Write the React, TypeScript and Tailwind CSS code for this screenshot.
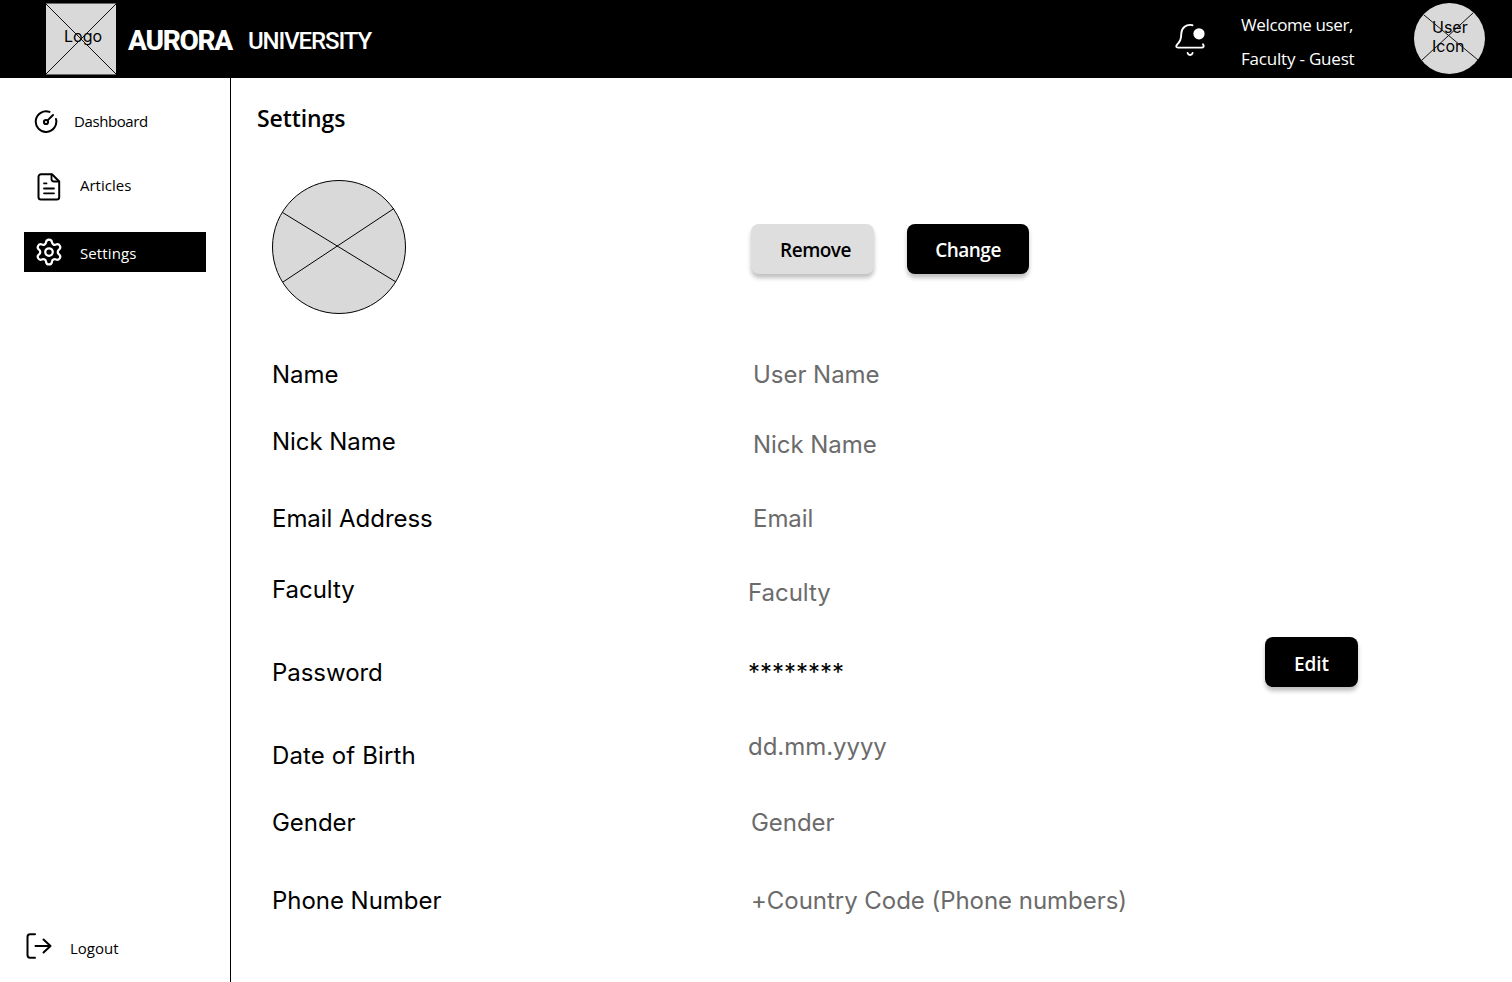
import React from "react";
import { Settings as SettingsIcon } from "lucide-react";

const human = "font-['Open_Sans','Noto_Sans',sans-serif] whitespace-nowrap";

const labels = [
  { text: "Name", gap: "" },
  { text: "Nick Name", gap: "mt-[37px]" },
  { text: "Email Address", gap: "mt-[47px]" },
  { text: "Faculty", gap: "mt-[41px]" },
  { text: "Password", gap: "mt-[53px]" },
  { text: "Date of Birth", gap: "mt-[53px] tracking-[0.13px]" },
  { text: "Gender", gap: "mt-[37px]" },
  { text: "Phone Number", gap: "mt-[48px]" },
];

const values = [
  { text: "User Name", gap: "pl-[5px]" },
  { text: "Nick Name", gap: "mt-[40px] pl-[5px]" },
  { text: "Email", gap: "mt-[44px] pl-[5px]" },
  { text: "Faculty", gap: "mt-[44px]" },
  { text: "********", gap: "mt-[50px] text-black" },
  { text: "dd.mm.yyyy", gap: "mt-[44px]" },
  { text: "Gender", gap: "mt-[46px] pl-[3px]" },
  { text: "+Country Code (Phone numbers)", gap: "mt-[48px] pl-[3px]" },
];

function Header() {
  return (
    <header className="flex h-[78px] shrink-0 bg-black text-white">
      <div className="ml-[46px] mt-[3px] grid h-[72px] w-[70px] shrink-0 bg-[#d9d9d9] text-black">
        <span className="col-start-1 row-start-1 ml-[18px] mt-[23px] text-[16px] leading-[20px]">Logo</span>
        <svg className="col-start-1 row-start-1" width="70" height="72" viewBox="0 0 70 72" fill="none" stroke="#111">
          <path d="M0 .5H70M0 71.5H70" stroke="#666" />
          <path d="M0 1 70 71M0 71 70 1" />
        </svg>
      </div>
      <div className="ml-3 mt-[21px] w-[104px] whitespace-nowrap font-['Roboto',sans-serif] text-[28px] font-extrabold leading-[40px] tracking-[-1.3px]">AURORA</div>
      <div className="ml-[16px] mt-[21px] whitespace-nowrap font-['Roboto',sans-serif] text-[24px] font-medium leading-[40px] tracking-[-1.1px]">UNIVERSITY</div>
      <svg className="ml-auto mr-[31px] mt-[20px]" width="40" height="40" viewBox="0 0 40 40" fill="none" stroke="white" strokeWidth="1.9" strokeLinecap="round">
        <path d="M22.5 5.2C16 3.8 11.5 8 11.3 13.5C11.2 19.5 10 21.2 7.2 24.5C5.5 26.4 6.2 27.6 8 27.6H31.5C33.8 27.6 34.3 26 33 24.2" />
        <path d="M17.6 33C18.4 35.6 21.8 35.6 22.6 33" />
        <circle cx="29" cy="13.8" r="5.6" fill="white" stroke="none" />
      </svg>
      <div className={`${human} mt-[8px] w-[173px] text-[17px] leading-[34px]`}>
        <div className="tracking-[-0.38px]">Welcome user,</div>
        <div className="tracking-[-0.2px]">Faculty - Guest</div>
      </div>
      <div className="mr-[27px] mt-[3px] grid h-[71px] w-[71px] shrink-0 rounded-full bg-[#d9d9d9] text-black">
        <div className="col-start-1 row-start-1 ml-[18px] mt-[15px] text-[16px] leading-[19px]">
          User
          <br />
          Icon
        </div>
        <svg className="col-start-1 row-start-1" width="71" height="71" viewBox="0 0 71 71" fill="none" stroke="#111">
          <path d="M10 12 64 57M8 57 59 10" />
        </svg>
      </div>
    </header>
  );
}

function Sidebar() {
  return (
    <nav className={`${human} flex w-[231px] shrink-0 flex-col border-r border-black text-[15px] leading-[20px]`}>
      <div className="mt-[32px] flex h-6 items-center pl-[34px]">
        <svg width="24" height="24" viewBox="0 0 24 24" fill="none" stroke="black" strokeWidth="2" strokeLinecap="round">
          <path d="M15.5 1.9A10.3 10.3 0 1 0 22 9" />
          <circle cx="12" cy="12" r="2.1" />
          <path d="M13.6 10.4 19 5" />
        </svg>
        <span className="-mt-[2px] ml-4 tracking-[-0.4px]">Dashboard</span>
      </div>
      <div className="mt-[38px] flex h-[30px] items-center pl-[37px]">
        <svg width="24" height="28" viewBox="0 0 24 28" fill="none" stroke="black" strokeWidth="2" strokeLinecap="round" strokeLinejoin="round">
          <path d="M15 1.3H4A2.5 2.5 0 0 0 1.5 4V24A2.5 2.5 0 0 0 4 26.5H19.7A2.5 2.5 0 0 0 22.2 24V8.5Z" />
          <path d="M14.5 1.5V6A2.5 2.5 0 0 0 17 8.5H22M7 10.4H9.5M7 15.5H17M7 20.3H17" strokeWidth="1.8" />
        </svg>
        <span className="-mt-[5px] ml-[19px]">Articles</span>
      </div>
      <div className="ml-6 mt-[30px] flex h-10 w-[182px] items-center bg-black pl-[10px] text-white">
        <SettingsIcon size={30} strokeWidth={1.8} />
        <span className="ml-4 mt-[2px] tracking-[0.1px]">Settings</span>
      </div>
      <div className="mb-[21px] mt-auto flex h-[30px] items-center pl-[26px]">
        <svg width="27" height="27" viewBox="0 0 27 27" fill="none" stroke="black" strokeWidth="2" strokeLinecap="round" strokeLinejoin="round">
          <path d="M9 1.3H4Q1.5 1.3 1.5 4V22Q1.5 24.7 4 24.7H9M9.5 13H24.5M17.5 6.5 24.5 13 17.5 19.5" />
        </svg>
        <span className="ml-[17px] mt-[3px]">Logout</span>
      </div>
    </nav>
  );
}

const button = `${human} flex h-[50px] items-center justify-center rounded-[8px] pt-[3px] text-[19px] font-semibold shadow-[0_4px_4px_rgba(0,0,0,0.25)]`;

export default function App() {
  return (
    <div className="flex h-[982px] w-[1512px] flex-col overflow-hidden bg-white font-['Inter',sans-serif] text-black">
      <Header />
      <div className="flex min-h-0 flex-1">
        <Sidebar />
        <main className="flex-1">
          <h1 className={`${human} ml-[26px] mt-[24px] text-[23px] font-semibold leading-[32px] tracking-[-0.1px]`}>Settings</h1>
          <div className="ml-[41px] mt-[46px] flex h-[134px]">
            <svg width="134" height="134" viewBox="0 0 134 134" fill="none" stroke="black">
              <circle cx="67" cy="67" r="66.5" fill="#d9d9d9" />
              <path d="M10.5 32.5 124 102M11 102 122 28.5" />
            </svg>
            <button className={`${button} ml-[345px] mt-[44px] w-[123px] bg-[#dedede] pl-[6px] tracking-[-0.5px]`}>Remove</button>
            <button className={`${button} ml-[33px] mt-[44px] w-[122px] bg-black text-white tracking-[-0.5px]`}>Change</button>
          </div>
          <div className="ml-[41px] mt-[46px] flex text-[24px] leading-[30px] tracking-[-0.04px]">
            <div className="w-[476px]">
              {labels.map((l) => (
                <div key={l.text} className={l.gap}>{l.text}</div>
              ))}
            </div>
            <div className="w-[517px] text-[#6b6b6b]">
              {values.map((v) => (
                <div key={v.text} className={v.gap}>{v.text}</div>
              ))}
            </div>
            <button className={`${button} mt-[277px] w-[93px] bg-black text-white`}>Edit</button>
          </div>
        </main>
      </div>
    </div>
  );
}
